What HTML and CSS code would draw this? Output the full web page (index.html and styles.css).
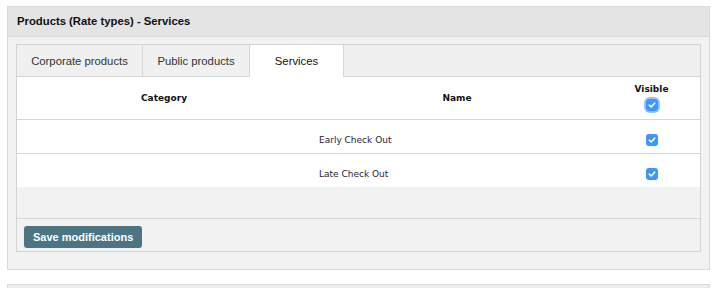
FILE: index.html
```html
<!DOCTYPE html>
<html lang="en">
  <head>
    <meta charset="UTF-8" />
    <title>Products (Rate types) - Services</title>
    <link rel="stylesheet" href="styles.css">
  </head>
  <body>
    <section class="panel">
      <header class="panel-head">Products (Rate types) - Services</header>
      <div class="panel-body">
        <div class="box">
          <nav class="tabs">
            <a class="tab">Corporate products</a>
            <a class="tab">Public products</a>
            <a class="tab active">Services</a>
          </nav>
          <table class="grid">
            <thead>
              <tr>
                <th class="col-cat">Category</th>
                <th class="col-name">Name</th>
                <th class="col-vis">
                  Visible
                  <span class="check focus">
                    <svg viewBox="0 0 12 12" width="12" height="12"><rect width="12" height="12" rx="3" fill="#3c97f8"/><path d="M3.3 6.2 5.2 8 8.8 4" fill="none" stroke="#fff" stroke-width="1.6" stroke-linecap="round" stroke-linejoin="round"/></svg>
                  </span>
                </th>
              </tr>
            </thead>
            <tbody>
              <tr>
                <td></td>
                <td class="name">Early Check Out</td>
                <td class="vis">
                  <span class="check">
                    <svg viewBox="0 0 12 12" width="12" height="12"><rect width="12" height="12" rx="3" fill="#3c97f8"/><path d="M3.3 6.2 5.2 8 8.8 4" fill="none" stroke="#fff" stroke-width="1.6" stroke-linecap="round" stroke-linejoin="round"/></svg>
                  </span>
                </td>
              </tr>
              <tr>
                <td></td>
                <td class="name">Late Check Out</td>
                <td class="vis">
                  <span class="check">
                    <svg viewBox="0 0 12 12" width="12" height="12"><rect width="12" height="12" rx="3" fill="#3c97f8"/><path d="M3.3 6.2 5.2 8 8.8 4" fill="none" stroke="#fff" stroke-width="1.6" stroke-linecap="round" stroke-linejoin="round"/></svg>
                  </span>
                </td>
              </tr>
            </tbody>
          </table>
          <div class="spacer"></div>
          <div class="actions">
            <button class="btn">Save modifications</button>
          </div>
        </div>
      </div>
    </section>
    <section class="panel next"></section>
  </body>
</html>
```

FILE: styles.css
```css
body {
  margin: 0;
  padding: 6px 10px 0 7px;
  background: #fff;
  font-family: "Liberation Sans", Arial, sans-serif;
  font-size: 11.3px;
  color: #222;
}

.panel {
  border: 1px solid #dadada;
  background: #f2f2f2;
  margin-bottom: 14px;
}

.panel-head {
  height: 29px;
  line-height: 29px;
  padding-left: 9px;
  background: #e4e4e4;
  border-bottom: 1px solid #d9d9d9;
  font-weight: bold;
  color: #111;
}

.panel-body {
  padding: 7px 8px 17px 8px;
}

.box {
  border: 1px solid #d3d3d3;
}

.tabs {
  display: flex;
  height: 31px;
  background: #f0f0f0;
  border-bottom: 1px solid #d6d6d6;
}

.tab {
  display: flex;
  align-items: center;
  justify-content: center;
  border-right: 1px solid #d6d6d6;
  color: #333;
}
.tab:nth-child(1) {
  width: 125px;
}
.tab:nth-child(2) {
  width: 106px;
}
.tab.active {
  width: 93px;
  background: #fff;
  height: 32px;
  color: #111;
}

.grid {
  width: 100%;
  border-collapse: collapse;
  background: #fff;
  font-family: "DejaVu Sans", Verdana, sans-serif;
  font-size: 9px;
  color: #222;
}

.grid th {
  font-weight: bold;
  color: #111;
  height: 42px;
  padding: 0;
  border-bottom: 1px solid #d6d6d6;
}
.col-cat {
  width: 294px;
}
.col-name {
  width: 292px;
}
.grid th.col-vis {
  line-height: 11px;
  padding-bottom: 2px;
  height: 40px;
}

.grid td {
  height: 27px;
  padding: 6px 0 0 0;
}
.grid tbody tr:first-child td {
  border-bottom: 1px solid #d6d6d6;
}
.grid td.name {
  padding-left: 8px;
  color: #2a1d2e;
}
.grid td.vis {
  text-align: center;
}

.check {
  display: inline-block;
  width: 12px;
  height: 12px;
  vertical-align: middle;
}
.check svg {
  display: block;
}
.check.focus {
  display: block;
  margin: 4px auto 0;
  border-radius: 4px;
  box-shadow: 0 0 0 2px #8ec3fb;
}

.spacer {
  height: 31px;
  background: #f2f2f2;
  border-bottom: 1px solid #d6d6d6;
}

.actions {
  padding: 7px 7px 3px;
}

.btn {
  display: block;
  height: 22px;
  padding: 0 9px;
  border: 0;
  border-radius: 3px;
  background: #4b7583;
  color: #fff;
  font-family: "Liberation Sans", Arial, sans-serif;
  font-size: 11px;
  font-weight: bold;
}

.next {
  height: 3px;
  background: #ececec;
  margin-bottom: 0;
}
```
